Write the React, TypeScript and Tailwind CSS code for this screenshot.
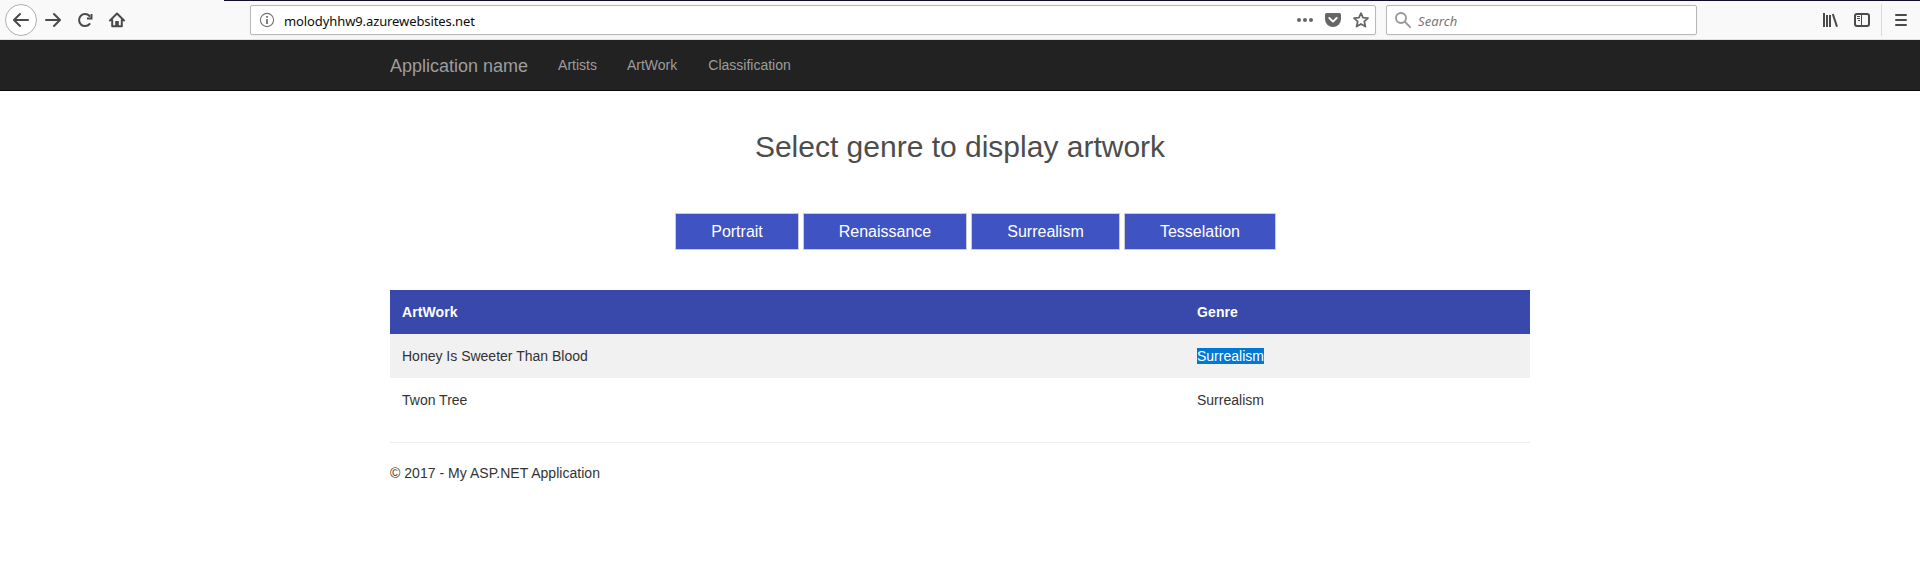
import type { ReactNode } from "react";

const NAV_LINKS = ["Artists", "ArtWork", "Classification"];
const GENRES = [
  { name: "Portrait", width: "w-[124px]" },
  { name: "Renaissance", width: "w-[164px]" },
  { name: "Surrealism", width: "w-[149px]" },
  { name: "Tesselation", width: "w-[152px]" },
];
const ROWS = [
  { title: "Honey Is Sweeter Than Blood", genre: "Surrealism", selected: true },
  { title: "Twon Tree", genre: "Surrealism", selected: false },
];

function Icon({ children, className = "text-[#4a4a4c]" }: { children: ReactNode; className?: string }) {
  return (
    <svg
      viewBox="0 0 16 16"
      className={`size-4 shrink-0 ${className}`}
      fill="none"
      stroke="currentColor"
      strokeWidth="2"
      strokeLinecap="round"
      strokeLinejoin="round"
    >
      {children}
    </svg>
  );
}

function Toolbar() {
  return (
    <header className="flex h-10 items-stretch border-b border-[#e0e0e0] bg-[#f9f9fa]">
      <div className="flex w-[224px] items-center pt-px pl-[5px]">
        <div className="flex size-8 items-center justify-center rounded-full border border-[#b1b1b1] bg-white">
          <Icon><path d="M15 8H1.5M7 2L1 8l6 6" /></Icon>
        </div>
        <Icon className="ml-2 text-[#4a4a4c]"><path d="M1 8h13.5M9 2l6 6-6 6" /></Icon>
        <Icon className="ml-4 text-[#4a4a4c]">
          <path d="M12.6 12A6 6 0 1 1 12.5 4" />
          <path d="M14.500 2v4.500H10" strokeLinecap="butt" strokeLinejoin="miter" />
        </Icon>
        <Icon className="ml-4 text-[#4a4a4c]">
          <path d="M1 8.5L8 1.5l7 7M3.2 8v6.2h9.6V8" />
          <path d="M6.2 14V9h3.6v5z" fill="currentColor" stroke="none" />
        </Icon>
      </div>

      <div className="flex min-w-0 flex-1 border-t border-[#0f0d28]">
        <div className="mt-1 ml-[26px] flex h-[30px] w-[1126px] items-center rounded-[2px] border border-[#b8b8b8] bg-white px-2 shadow-[0_1px_3px_rgba(0,0,0,0.05)]">
          <svg viewBox="0 0 16 16" className="size-4" fill="none" stroke="#737373">
            <circle cx="8" cy="8" r="6.6" strokeWidth="1.1" />
            <path d="M8 7v5M8 4v1.7" strokeWidth="1.8" />
          </svg>
          <span className="ml-[9px] flex-1 pt-0.5 font-['Noto_Sans',sans-serif] text-[13px] tracking-[-0.1px] text-[#0c0c0d]">
            molodyhhw9.azurewebsites.net
          </span>
          <svg viewBox="0 0 16 16" className="size-4" fill="#666667">
            <circle cx="2" cy="8" r="2" />
            <circle cx="8" cy="8" r="2" />
            <circle cx="14" cy="8" r="2" />
          </svg>
          <svg viewBox="0 0 16 16" className="ml-3 size-4">
            <path d="M1.6 1h12.8Q16 1 16 2.6V7a8 8 0 0 1-16 0V2.6Q0 1 1.6 1z" fill="#666667" />
            <path d="M4.3 6L8 9.6 11.7 6" fill="none" stroke="#fff" strokeWidth="1.9" strokeLinecap="round" strokeLinejoin="round" />
          </svg>
          <svg viewBox="0 0 16 16" className="mr-[-2px] ml-3 size-4" fill="none" stroke="#666667" strokeWidth="1.8" strokeLinejoin="round">
            <path d="M8 1.200l2 4.400 5 .5-3.700 3.300 1.100 5.200L8 12l-4.400 2.600 1.100-5.200L1 6.100l5-.5z" />
          </svg>
        </div>
        <div className="mt-1 ml-[10px] flex h-[30px] w-[311px] items-center rounded-[2px] border border-[#b8b8b8] bg-white pl-2 shadow-[0_1px_3px_rgba(0,0,0,0.05)]">
          <svg viewBox="0 0 16 16" className="size-4" fill="none" stroke="#979797" strokeWidth="1.9">
            <circle cx="6" cy="6" r="5" />
            <path d="M9.700 9.700l6 6" />
          </svg>
          <span className="ml-[7px] pt-0.5 font-['Noto_Sans',sans-serif] text-[13px] tracking-[0.1px] text-[#757575] italic">Search</span>
        </div>
        <div className="mt-[3px] ml-auto flex h-8 items-center">
          <svg viewBox="0 0 16 16" className="size-4" fill="none" stroke="#4a4a4c" strokeWidth="2">
            <path d="M2 1v14M5 3v12M8 3v12M10.800 2l4.200 12.700" />
          </svg>
          <svg viewBox="0 0 16 16" className="ml-4 size-4" fill="none" stroke="#4a4a4c">
            <rect x="1" y="2" width="14" height="12" rx="2" strokeWidth="2" />
            <path d="M7.500 2v12" />
            <path d="M3 4.500h3M3 6.500h3M4 8.500h2" />
          </svg>
          <div className="ml-[11px] h-8 w-px bg-[#dadadb]" />
          <svg viewBox="0 0 16 16" className="mr-[11px] ml-[11px] size-4" stroke="#4a4a4c" strokeWidth="2" strokeLinecap="round">
            <path d="M3 3h10M3 8h10M3 13h10" />
          </svg>
        </div>
      </div>
    </header>
  );
}

export default function App() {
  return (
    <div className="min-h-[566px] bg-white font-['Liberation_Sans',Arial,sans-serif] text-sm leading-5 text-[#333]">
      <Toolbar />
      <nav className="h-[51px] border-b border-[#080808] bg-[#222] text-[#9d9d9d]">
        <div className="mx-auto flex h-[50px] w-[1140px] items-center">
          <span className="mr-[15px] pt-0.5 text-lg">Application name</span>
          {NAV_LINKS.map((link) => (
            <a key={link} className="px-[15px] last:pl-4">{link}</a>
          ))}
        </div>
      </nav>
      <main className="mx-auto w-[1140px]">
        <h2 className="pt-[39px] text-center text-[30px] leading-[33px] text-[#4d4d4d]">
          Select genre to display artwork
        </h2>
        <div className="mt-[50px] ml-[285px] flex gap-1">
          {GENRES.map(({ name, width }) => (
            <button
              key={name}
              className={`h-[37px] border border-[#ccc] bg-[#3f54c2] text-base leading-5 text-white ${width}`}
            >
              {name}
            </button>
          ))}
        </div>
        <table className="mt-10 w-full table-fixed">
          <thead>
            <tr className="h-11 bg-[#3949ab] text-left text-white">
              <th className="w-[795px] px-3 tracking-[0.1px]">ArtWork</th>
              <th className="px-3 tracking-[0.1px]">Genre</th>
            </tr>
          </thead>
          <tbody>
            {ROWS.map(({ title, genre, selected }) => (
              <tr key={title} className="h-11 odd:bg-[#f1f1f1]">
                <td className="px-3">{title}</td>
                <td className="px-3">
                  <span className={selected ? "bg-[#0078d7] text-white" : ""}>{genre}</span>
                </td>
              </tr>
            ))}
          </tbody>
        </table>
        <hr className="mt-5 border-[#eee]" />
        <footer className="mt-5 tracking-[0.03px]">© 2017 - My ASP.NET Application</footer>
      </main>
    </div>
  );
}
